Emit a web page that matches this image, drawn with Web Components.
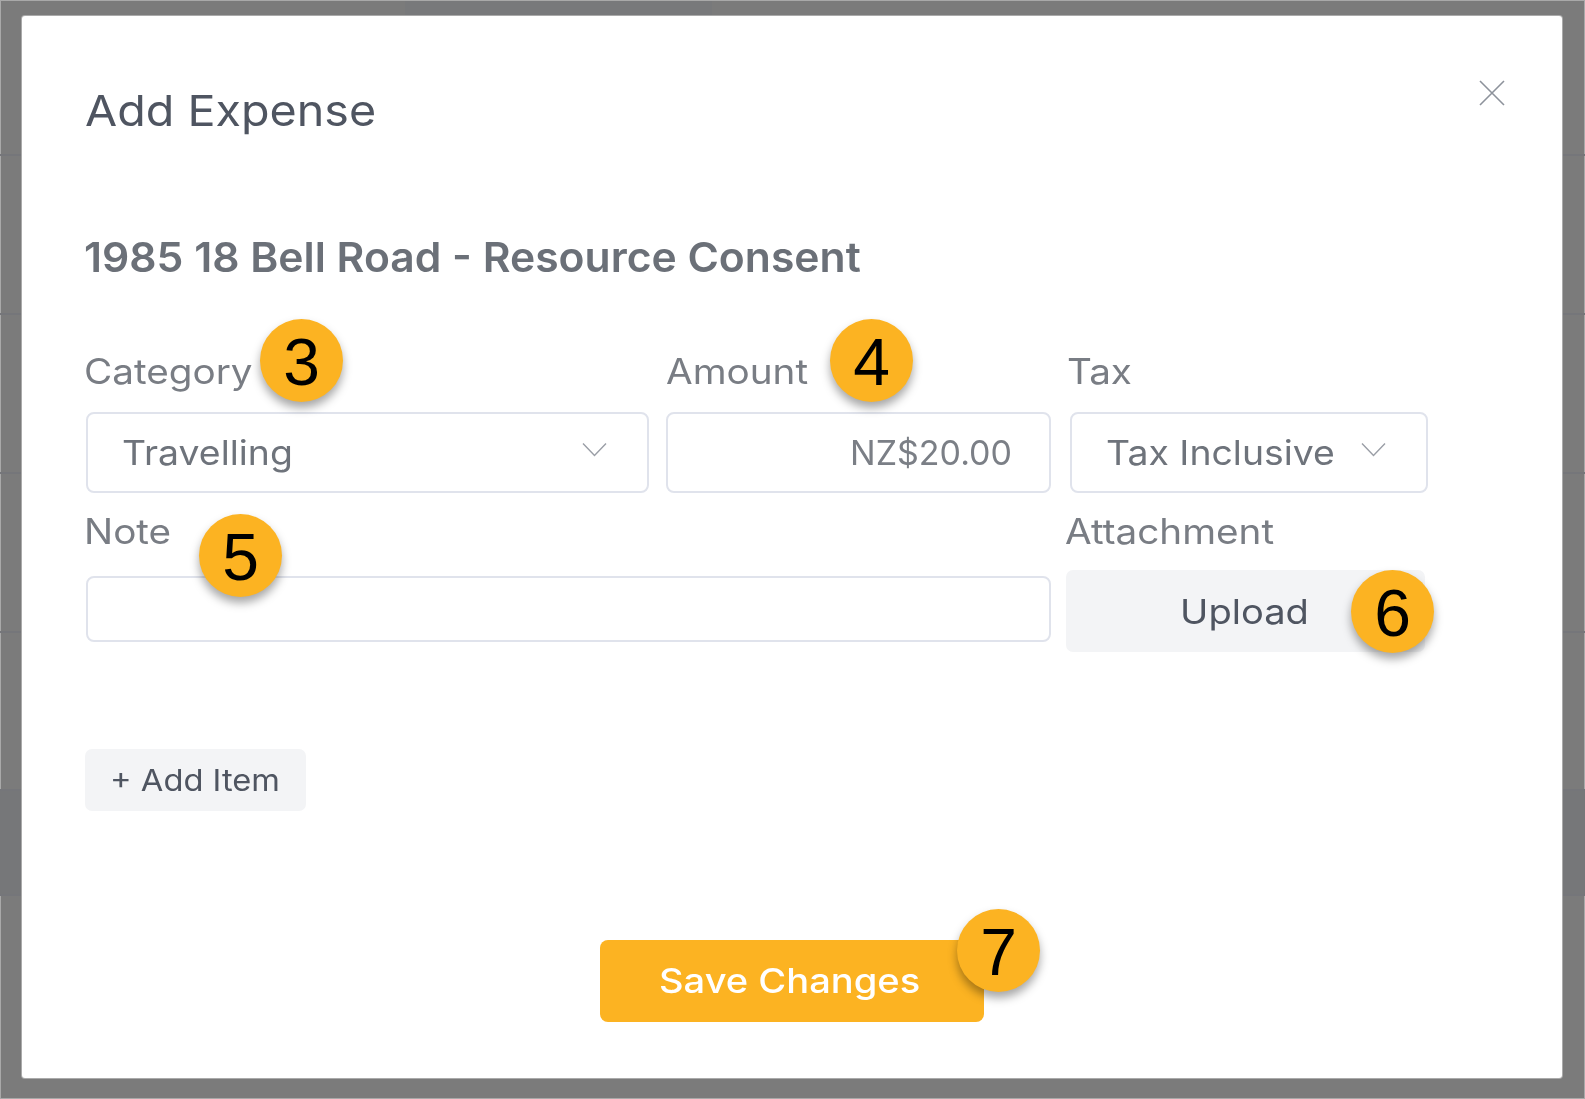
<!DOCTYPE html>
<html lang="en">
<head>
<meta charset="utf-8">
<title>Add Expense</title>
<style>
  html, body { margin: 0; padding: 0; }
  body { font-family: Inter, "Noto Sans", "Liberation Sans", sans-serif; }
</style>
</head>
<body>
<expense-page>
  <page-backdrop></page-backdrop>
  <app-modal heading="Add Expense" subheading="1985 18 Bell Road - Resource Consent">
    <form-row>
      <form-field label="Category" style="width:563px">
        <select-box>Travelling</select-box>
        <step-badge slot="badge" style="--x:174px;--y:-35px">3</step-badge>
      </form-field>
      <form-field label="Amount" style="width:385px;--label-left:0px">
        <text-box align="right">NZ$20.00</text-box>
        <step-badge slot="badge" style="--x:164px;--y:-35px">4</step-badge>
      </form-field>
      <form-field label="Tax" style="width:360px;padding-left:2px;--label-left:-3px">
        <select-box>Tax Inclusive</select-box>
      </form-field>
    </form-row>
    <form-row style="--label-top:3px;--row-gap:15px">
      <form-field label="Note" style="width:965px">
        <text-box short></text-box>
        <step-badge slot="badge" style="--x:113px;--y:1px">5</step-badge>
      </form-field>
      <form-field label="Attachment" style="width:360px;--label-left:-1px">
        <soft-button wide>Upload</soft-button>
        <step-badge slot="badge" style="--x:285px;--y:57px">6</step-badge>
      </form-field>
    </form-row>
    <soft-button class="add">+ Add Item</soft-button>
    <primary-button slot="footer">
      Save Changes
      <step-badge slot="badge" style="--x:357px;--y:-31px">7</step-badge>
    </primary-button>
  </app-modal>
</expense-page>

<script>
function shadow(el, html) {
  el.attachShadow({ mode: 'open' }).innerHTML = html;
}

class ExpensePage extends HTMLElement {
  connectedCallback() {
    shadow(this, `
      <style>
        :host { display: grid; width: 1585px; height: 1099px; overflow: hidden; background: #7b7b7b; filter: blur(.45px); }
        ::slotted(*) { grid-area: 1 / 1; }
      </style>
      <slot></slot>
    `);
  }
}

// the dimmed table behind the dialog
class PageBackdrop extends HTMLElement {
  connectedCallback() {
    shadow(this, `
      <style>
        :host { display: flex; flex-direction: column; box-shadow: inset 0 0 0 1px #a9a9a9; }
        .row { border-bottom: 2px solid #75767a; box-sizing: border-box; }
        .head { height: 156px; }
        .r { height: 159px; }
        .r.last { height: 158px; }
        .dark { height: 105px; background: #767779; }
        .top { position: absolute; left: 405px; top: 1px; width: 307px; height: 14px; background: #78797b; }
      </style>
      <div class="top"></div>
      <div class="row head"></div>
      <div class="row r"></div>
      <div class="row r"></div>
      <div class="row r"></div>
      <div class="row r last"></div>
      <div class="row dark"></div>
    `);
  }
}

class AppModal extends HTMLElement {
  connectedCallback() {
    shadow(this, `
      <style>
        :host {
          display: flex; flex-direction: column; box-sizing: border-box; position: relative;
          margin: 16px 23px 21px 22px; padding: 64px 64px 56px 64px;
          background: #fff; border-radius: 3px; color: #4b5563;
          box-shadow: 0 0 0 1px #aaa;
        }
        header { display: flex; justify-content: space-between; align-items: flex-start; }
        h2, h3 { transform-origin: left center; white-space: nowrap; }
        h2 { margin: 0 0 0 -1px; font-size: 43px; line-height: 60px; font-weight: 400; transform: scaleX(1.085); color: #4f5561; }
        svg { display: block; margin: 0 -7px 0 0; }
        h3 { margin: 92px 0 72px -2px; font-size: 41px; line-height: 50px; font-weight: 600; transform: scaleX(1.04); color: #6b7078; }
        .foot { display: flex; justify-content: center; margin-top: 129px; }
      </style>
      <header>
        <h2>${this.getAttribute('heading')}</h2>
        <svg width="26" height="26" viewBox="0 0 26 26" fill="none" stroke="#8d929b" stroke-width="1.6"><path d="M1 1 25 25M25 1 1 25"/></svg>
      </header>
      <h3>${this.getAttribute('subheading')}</h3>
      <slot></slot>
      <div class="foot"><slot name="footer"></slot></div>
    `);
  }
}

class FormRow extends HTMLElement {
  connectedCallback() {
    shadow(this, `
      <style>
        :host { display: flex; margin-bottom: 20px; gap: var(--row-gap, 17px); }
      </style>
      <slot></slot>
    `);
  }
}

class FormField extends HTMLElement {
  connectedCallback() {
    shadow(this, `
      <style>
        :host { display: block; box-sizing: border-box; position: relative; }
        label {
          display: block; height: 57px; margin-left: var(--label-left, -2px);
          font-size: 35px; line-height: 30px; color: #797d84; white-space: nowrap;
        }
        span { display: block; padding-top: var(--label-top, 2px); transform: scaleX(1.105); transform-origin: left center; }
      </style>
      <label><span>${this.getAttribute('label')}</span></label>
      <slot></slot>
      <slot name="badge"></slot>
    `);
  }
}

class SelectBox extends HTMLElement {
  connectedCallback() {
    shadow(this, `
      <style>
        :host {
          display: flex; align-items: center; justify-content: space-between; box-sizing: border-box;
          height: 81px; padding: 0 40px 0 34px; margin-top: 1px;
          border: 2px solid #e0e3ec; border-radius: 8px;
          font-size: 34px; color: #6e737b; white-space: nowrap;
        }
        span { display: inline-block; transform: scaleX(1.1); transform-origin: left center; }
        svg { display: block; flex: none; margin-top: -6px; }
      </style>
      <span><slot></slot></span>
      <svg width="25" height="15" viewBox="0 0 25 15" fill="none" stroke="#9a9ea6" stroke-width="1.4"><path d="M1 1.5 12.5 13.5 24 1.5"/></svg>
    `);
  }
}

class TextBox extends HTMLElement {
  connectedCallback() {
    const short = this.hasAttribute('short');
    shadow(this, `
      <style>
        :host {
          display: flex; align-items: center; box-sizing: border-box;
          justify-content: ${this.getAttribute('align') === 'right' ? 'flex-end' : 'flex-start'};
          height: ${short ? 66 : 81}px; margin-top: ${short ? 6 : 1}px; padding: 0 37px;
          border: 2px solid #e0e3ec; border-radius: 8px;
          font-size: 34px; color: #7b7f86;
        }
      </style>
      <slot></slot>
    `);
  }
}

class SoftButton extends HTMLElement {
  connectedCallback() {
    const wide = this.hasAttribute('wide');
    shadow(this, `
      <style>
        :host {
          display: ${wide ? 'flex' : 'inline-flex'}; align-items: center; justify-content: center; box-sizing: border-box;
          align-self: flex-start; width: ${wide ? '359px' : '221px'}; height: ${wide ? '82px' : '62px'};
          margin-top: ${wide ? 0 : '77px'}; margin-left: ${wide ? 0 : '-1px'};
          background: #f3f4f6; border-radius: 7px;
          font-size: ${wide ? '34px' : '30px'}; color: #4f5561;
        }
        span { display: inline-block; margin-left: -2px; transform: scaleX(${wide ? 1.12 : 1.09}); }
      </style>
      <span><slot></slot></span>
    `);
  }
}

class PrimaryButton extends HTMLElement {
  connectedCallback() {
    shadow(this, `
      <style>
        :host {
          display: flex; align-items: center; justify-content: center; position: relative; box-sizing: border-box;
          width: 384px; height: 82px; padding-bottom: 2px;
          background: #fcb322; border-radius: 8px;
          font-size: 34px; font-weight: 500; color: #fff; white-space: nowrap;
        }
        div { margin-left: -5px; transform: scaleX(1.12); }
      </style>
      <div><slot></slot></div>
      <slot name="badge"></slot>
    `);
  }
}

class StepBadge extends HTMLElement {
  connectedCallback() {
    shadow(this, `
      <style>
        :host {
          position: absolute; left: var(--x); top: var(--y); z-index: 5;
          display: flex; align-items: center; justify-content: center; box-sizing: border-box;
          width: 83px; height: 83px; padding-top: 3px; border-radius: 50%;
          background: #fcb322; color: #000;
          box-shadow: 0 6px 10px rgba(0, 0, 0, .35);
          font: 66px/83px "Liberation Sans", Arial, sans-serif;
        }
      </style>
      <slot></slot>
    `);
  }
}

customElements.define('expense-page', ExpensePage);
customElements.define('page-backdrop', PageBackdrop);
customElements.define('app-modal', AppModal);
customElements.define('form-row', FormRow);
customElements.define('form-field', FormField);
customElements.define('select-box', SelectBox);
customElements.define('text-box', TextBox);
customElements.define('soft-button', SoftButton);
customElements.define('primary-button', PrimaryButton);
customElements.define('step-badge', StepBadge);
</script>
</body>
</html>
